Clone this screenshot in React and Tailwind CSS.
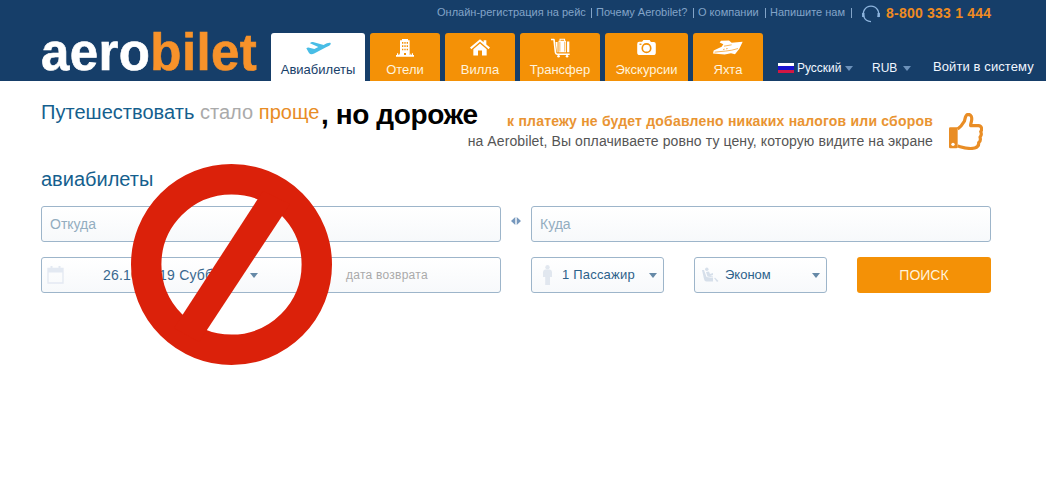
import React from 'react';

const PlaneIcon = () => (
    <svg viewBox="0 0 75 42" className="h-[14px] w-[25px]" fill="#48bde6">
        <path d="M1 22 Q5 18 10 20 L25 24 L37 18 L12 7 Q15 2 21 3 L53 12 C63 6 72 4 74 7 C76 11 67 16 60 19 L26 37 C18 41 13 41 9 36 Z" />
    </svg>
);

const HotelIcon = () => (
    <svg viewBox="0 0 54 54" className="h-[18px] w-[18px]" fill="#fff">
        <path fillRule="evenodd" d="M12 4 L18 4 L18 0 L36 0 L36 4 L41 4 L41 49 L30 49 L30 42 L24 42 L24 49 L12 49 Z M18 9 h4 v5 h-4 Z M25 9 h4 v5 h-4 Z M32 9 h4 v5 h-4 Z M18 19 h4 v5 h-4 Z M25 19 h4 v5 h-4 Z M32 19 h4 v5 h-4 Z M18 29 h4 v5 h-4 Z M25 29 h4 v5 h-4 Z M32 29 h4 v5 h-4 Z" />
        <path d="M0 48 H54 V53 H0 Z M3 43 h3 v6 h-3 Z M8 44 h3 v5 h-3 Z M43 44 h3 v5 h-3 Z M48 43 h3 v6 h-3 Z" />
    </svg>
);

const HomeIcon = () => (
    <svg viewBox="0 0 60 50" className="h-[17px] w-[20px]" fill="#fff">
        <path d="M30 0 L41 9 V3 H49 V16 L60 25 L56 30 L30 8 L4 30 L0 25 Z" />
        <path d="M30 13 L50 30 V49 H36 V34 H24 V49 H10 V30 Z" />
    </svg>
);

const LuggageIcon = () => (
    <svg viewBox="0 0 58 60" className="h-[20px] w-[19px]" fill="#fff">
        <path d="M0 2 H8 C11 2 12 4 12 7 L16 43 C16 46 18 47 21 47 H57 V51 H20 C14 51 12 48 11 43 L7 6 H0 Z" />
        <path fillRule="evenodd" d="M26 8 V2 H43 V8 H46 V43 H23 V8 Z M29 8 H40 V5 H29 Z" />
        <path d="M14 12 H20 V43 H18 Z M49 10 H56 V43 H49 Z" />
        <path d="M27 11 V41 M42 11 V41" stroke="#f49106" strokeWidth="2" />
        <circle cx="23" cy="55" r="4" />
        <circle cx="49" cy="55" r="4" />
    </svg>
);

const CameraIcon = () => (
    <svg viewBox="0 0 57 46" className="h-[15px] w-[19px]">
        <path d="M6 5 H15 L19 0 H38 L42 6 H51 Q57 6 57 12 V38 Q57 46 49 46 H8 Q0 46 0 38 V12 Q0 5 6 5 Z" fill="#fff" />
        <circle cx="28.5" cy="25" r="13" fill="none" stroke="#f49106" strokeWidth="5" />
        <path d="M7 13 h6" stroke="#f49106" strokeWidth="4" />
    </svg>
);

const YachtIcon = () => (
    <svg viewBox="0 0 90 44" className="h-[15px] w-[30px]">
        <path d="M0 40 L2 31 L26 20 L31 12 L20 7 L24 2 L48 1 L56 8 L89 5 L79 26 L66 42 L54 39 L35 43 Z" fill="#fff" />
        <path d="M33 18 L56 14 M30 28 L35 27 M39 26 L44 25 M5 36 C25 33 50 34 75 25" stroke="#f49106" strokeWidth="2" fill="none" />
    </svg>
);

const HeadsetIcon = () => (
    <svg viewBox="0 0 18 18" className="h-[18px] w-[18px]" fill="none" stroke="#8db4dd">
        <path d="M2 12 A7.7 7.7 0 1 1 16 12" strokeWidth="1.4" />
        <path d="M1.3 8 V12 M16.7 8 V12" strokeWidth="2.4" />
        <path d="M2 12 C3 15 5 16.4 9 16.6" strokeWidth="1.2" />
    </svg>
);

const ThumbIcon = () => (
    <svg viewBox="0 0 105 111" className="h-[37px] w-[35px]">
        <path d="M3 46 Q3 43 7 43 H29 V103 Q29 106 25 106 H7 Q3 106 3 102 Z" fill="#e98d25" />
        <circle cx="15" cy="94" r="5" fill="#fff" />
        <path d="M29 48 C36 43 44 34 49 25 C52 17 51 5 60 4 C70 4 72 13 71 21 C70 29 67 34 68 38 H91 C102 39 103 50 98 56 C101 62 100 68 96 72 C98 79 97 86 92 89 C93 98 88 103 80 105 C61 110 44 103 29 99" fill="none" stroke="#e98d25" strokeWidth="9.5" strokeLinejoin="round" />
    </svg>
);

const CalendarIcon = () => (
    <svg viewBox="0 0 17 18" className="h-[18px] w-[17px]" fill="none" stroke="#e3e9f2">
        <path d="M1 2.5 H16 V17 H1 Z" strokeWidth="1.3" />
        <path d="M1 4.5 H16" strokeWidth="4" />
        <path d="M4.5 0 V4 M12.5 0 V4" strokeWidth="2" />
    </svg>
);

const PersonIcon = () => (
    <svg viewBox="0 0 9 20" className="h-[20px] w-[9px]" fill="#e1e7ef">
        <circle cx="4.5" cy="2.3" r="2.2" />
        <path d="M2 4.5 H7 Q9 5 9 7 V12 H7 V20 H2.2 V12 H0 V7 Q0 5 2 4.5 Z" />
    </svg>
);

const SeatIcon = () => (
    <svg viewBox="0 0 17 16" className="h-[16px] w-[17px]" fill="#d6dfea">
        <circle cx="4.8" cy="2.2" r="1.7" />
        <path d="M0 3 L2 3 L4.5 10 L11 11 V14.5 H4.5 Q2.5 14.5 2 12 Z" />
        <path d="M4 5 L7 4.5 L8 7 L11 6 V8 L8 9 L11 9.5 V10.5 L5.5 9.5 Z M12 11 L13.2 10.7 L16.5 14 L15 15 Z" />
    </svg>
);

const Caret = ({ className = '' }) => (
    <svg viewBox="0 0 8 5" className={`h-[5px] w-[8px] shrink-0 ${className}`} fill="currentColor">
        <path d="M0 0 H8 L4 5 Z" />
    </svg>
);

const tabs = [
    { label: 'Авиабилеты', icon: PlaneIcon, style: 'w-[94px] bg-white text-[#164069]' },
    { label: 'Отели', icon: HotelIcon, style: 'w-[70px] bg-[#f49106] text-[#fff3dc]' },
    { label: 'Вилла', icon: HomeIcon, style: 'w-[70px] bg-[#f49106] text-[#fff3dc]' },
    { label: 'Трансфер', icon: LuggageIcon, style: 'w-[80px] bg-[#f49106] text-[#fff3dc]' },
    { label: 'Экскурсии', icon: CameraIcon, style: 'w-[83px] bg-[#f49106] text-[#fff3dc]' },
    { label: 'Яхта', icon: YachtIcon, style: 'w-[70px] bg-[#f49106] text-[#fff3dc]' },
];

const links = [
    { label: 'Онлайн-регистрация на рейс', style: 'w-[159px]' },
    { label: 'Почему Aerobilet?', style: 'w-[102px]' },
    { label: 'О компании', style: 'w-[72px]' },
    { label: 'Напишите нам', style: 'w-[86px]' },
];

const field = 'flex h-9 items-center rounded-[3px] border border-[#9db5ca] bg-linear-to-b from-white to-[#f7f9fb]';

const Header = () => (
    <header className="flex h-[81px] bg-[#163e69] pl-[41px]">
        <div className="w-[230px] shrink-0 pt-[27px] text-[51px] leading-[51px] font-bold tracking-[0.4px] text-white [-webkit-text-stroke:0.6px]">
            aero<span className="text-[#f7922a]">bilet</span>
        </div>
        <div className="flex-1">
            <div className="flex h-[33px] pl-[166px] text-[11px] text-[#83a4c8]">
                {links.map((link) => (
                    <div key={link.label} className={`flex h-[25px] items-center justify-between whitespace-nowrap ${link.style}`}>
                        <a>{link.label}</a>
                        <span className="mr-1 h-[10px] w-px bg-[#83a4c8]" />
                    </div>
                ))}
                <div className="pt-[5px] pl-[6px]"><HeadsetIcon /></div>
                <div className="pt-[3px] pl-[6px] text-[14px] leading-5 font-bold tracking-[0.22px] whitespace-nowrap text-[#ef8b22]">8-800 333 1 444</div>
            </div>
            <div className="flex h-12">
                <nav className="flex gap-[5px]">
                    {tabs.map(({ label, icon: Icon, style }) => (
                        <a key={label} className={`flex flex-col items-center rounded-t-[3px] text-[13px] ${style}`}>
                            <span className="flex h-[29px] items-center"><Icon /></span>
                            <span className="leading-4">{label}</span>
                        </a>
                    ))}
                </nav>
                <div className="flex h-12 items-center pt-[22px] pl-[15px] text-[12px] whitespace-nowrap text-[#f1f7ff]">
                    <span className="flex h-[10px] w-4 flex-col">
                        <span className="flex-1 bg-white" />
                        <span className="flex-1 bg-[#1712cf]" />
                        <span className="flex-1 bg-[#d31743]" />
                    </span>
                    <span className="w-12 pl-[3px]">Русский</span>
                    <Caret className="ml-[3px] text-[#6c91ba]" />
                    <span className="w-[31px] ml-[19px]">RUB</span>
                    <Caret className="text-[#6c91ba]" />
                    <span className="-mt-[2px] ml-[22px] text-[13px] tracking-[0.1px]">Войти в систему</span>
                </div>
            </div>
        </div>
    </header>
);

const App = () => (
    <div className="relative h-[484px] w-[1046px] overflow-hidden bg-white font-['Liberation_Sans',Arial,sans-serif]">
        <Header />
        <main className="pl-[41px]">
            <div className="flex h-[84px] w-[950px]">
                <h1 className="w-[280px] shrink-0 pt-[19px] text-[20px] leading-6 tracking-[0.03px] whitespace-nowrap text-[#155f8e]">
                    Путешествовать <span className="text-[#aaa]">стало</span> <span className="text-[#e88c24]">проще</span>
                </h1>
                <div className="w-[106px] shrink-0 pt-[18px] text-[28px] leading-8 font-bold tracking-[-0.4px] whitespace-nowrap text-black">
                    , но дороже
                </div>
                <div className="flex-1 pt-[30px] text-[14px] leading-5 whitespace-nowrap text-[#555]">
                    <p className="flex justify-end font-bold tracking-[0.2px] text-[#e99432]">к платежу не будет добавлено никаких налогов или сборов</p>
                    <p className="flex justify-end tracking-[0.1px]">на Aerobilet, Вы оплачиваете ровно ту цену, которую видите на экране</p>
                </div>
                <div className="w-[58px] shrink-0 pt-[32px] pl-[15px]"><ThumbIcon /></div>
            </div>
            <h2 className="h-[41px] pt-[2px] text-[20px] leading-6 text-[#155f8e]">авиабилеты</h2>
            <div className="flex w-[950px]">
                <div className={`${field} w-[460px] pl-2 text-[14px] text-[#93adc0]`}>Откуда</div>
                <div className="flex w-[30px] justify-center pt-[11px]">
                    <svg viewBox="0 0 10 8" className="h-2 w-[10px]" fill="#7798bd">
                        <path d="M0 4 L4.3 0 V8 Z M5.7 0 L10 4 L5.7 8 Z" />
                    </svg>
                </div>
                <div className={`${field} w-[460px] pl-2 text-[14px] text-[#93adc0]`}>Куда</div>
            </div>
            <div className="mt-[15px] flex w-[950px] gap-[30px]">
                <div className={`${field} w-[460px] text-[14px] text-[#39688f]`}>
                    <div className="w-[61px] pl-[5px]"><CalendarIcon /></div>
                    <span className="w-[147px] tracking-[0.2px] whitespace-nowrap">26.10.2019 Суббота</span>
                    <Caret className="text-[#6689a7]" />
                    <span className="ml-[88px] text-[12px] tracking-[0.25px] text-[#aaa]">дата возврата</span>
                </div>
                <div className={`${field} w-[133px] pr-[6px] pl-[11px] text-[13px] text-[#2c628b]`}>
                    <PersonIcon />
                    <span className="flex-1 pl-[10px] tracking-[0.2px] whitespace-nowrap">1 Пассажир</span>
                    <Caret className="text-[#6689a7]" />
                </div>
                <div className={`${field} w-[133px] pr-[6px] pl-[7px] text-[13px] text-[#2c628b]`}>
                    <SeatIcon />
                    <span className="flex-1 pl-[6px]">Эконом</span>
                    <Caret className="text-[#6689a7]" />
                </div>
                <button className="h-9 w-[134px] rounded-[3px] bg-[#f49106] text-[14px] text-[#fff3dc]">ПОИСК</button>
            </div>
        </main>
        {/* prohibition sign over the form */}
        <svg viewBox="0 0 201 201" className="absolute top-[164px] left-[131px] h-[201px] w-[201px]">
            <circle cx="100.5" cy="100.5" r="85.3" fill="none" stroke="#db210a" strokeWidth="30.4" />
            <path d="M132 27 L159 40 L68 178 L43 164 Z" fill="#db210a" />
        </svg>
    </div>
);

export default App;
